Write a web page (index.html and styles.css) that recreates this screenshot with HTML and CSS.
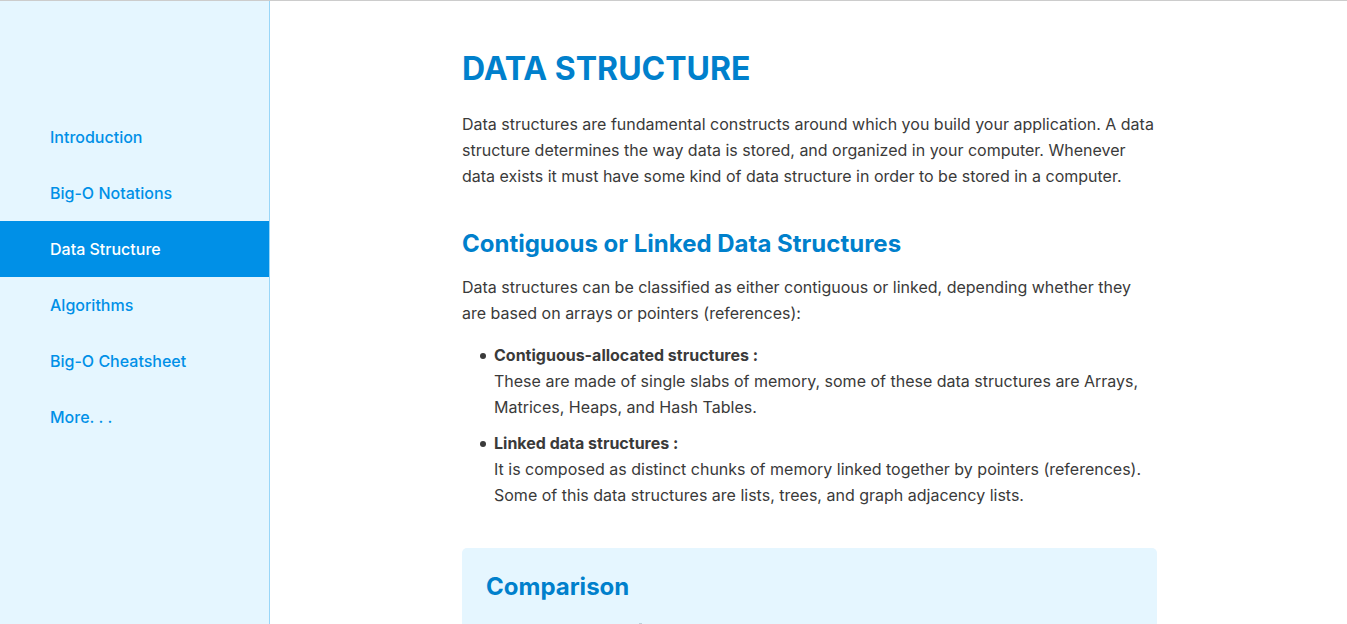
FILE: index.html
```
<!DOCTYPE html>
<html lang="en">
<head>
<meta charset="utf-8">
<title>Data Structure</title>
<link rel="stylesheet" href="styles.css">
</head>
<body>
<div class="page">
  <nav class="sidebar" aria-label="Topics">
    <ul class="menu">
      <li><a class="menu-link" href="#introduction">Introduction</a></li>
      <li><a class="menu-link" href="#notations">Big-O Notations</a></li>
      <li><a class="menu-link active" href="#data-structure" aria-current="page">Data Structure</a></li>
      <li><a class="menu-link" href="#algorithms">Algorithms</a></li>
      <li><a class="menu-link" href="#cheatsheet">Big-O Cheatsheet</a></li>
      <li><a class="menu-link" href="#more">More. . .</a></li>
    </ul>
  </nav>
  <main class="content">
    <article class="article">
      <h1 class="title">DATA STRUCTURE</h1>
      <p class="text">Data structures are fundamental constructs around which you build your application. A data structure determines the way data is stored, and organized in your computer. Whenever data exists it must have some kind of data structure in order to be stored in a computer.</p>
      <h2 class="subtitle">Contiguous or Linked Data Structures</h2>
      <p class="text">Data structures can be classified as either contiguous or linked, depending whether they are based on arrays or pointers (references):</p>
      <ul class="list">
        <li class="item"><div><strong>Contiguous-allocated structures :</strong><br>These are made of single slabs of memory, some of these data structures are Arrays, Matrices, Heaps, and Hash Tables.</div></li>
        <li class="item"><div><strong>Linked data structures :</strong><br>It is composed as distinct chunks of memory linked together by pointers (references). Some of this data structures are lists, trees, and graph adjacency lists.</div></li>
      </ul>
      <section class="panel">
        <h2 class="panel-title">Comparison</h2>
        <div class="panel-mark"></div>
      </section>
    </article>
  </main>
</div>
</body>
</html>
```

FILE: styles.css
```
* {
  box-sizing: border-box;
}

body {
  margin: 0;
  font-family: Inter, sans-serif;
  font-size: 16px;
  line-height: 26px;
  color: #3a3a3a;
  background: #fff;
}

.page {
  display: flex;
  height: 100vh;
  overflow: hidden;
  border-top: 1px solid #ccc;
}

.sidebar {
  flex: 0 0 270px;
  padding-top: 108px;
  background: #e5f6ff;
  border-right: 1px solid #99d6f8;
}

.menu {
  margin: 0;
  padding: 0;
  list-style: none;
}

.menu-link {
  display: block;
  padding: 15px 50px;
  font-weight: 500;
  color: #0090e7;
  text-decoration: none;
}

.menu-link.active {
  color: #fff;
  background: #0090e7;
}

.content {
  flex: 1;
  padding: 48px 190px 0 192px;
}

.title {
  margin: 0 0 22px;
  font-size: 32px;
  line-height: 40px;
  font-weight: 700;
  color: #0080cc;
}

.text {
  margin: 0;
}

.subtitle {
  margin: 39px 0 14px;
  font-size: 24px;
  line-height: 32px;
  font-weight: 700;
  color: #0080cc;
}

.list {
  display: grid;
  gap: 10px;
  margin: 16px 0 0;
  padding: 0 0 0 18px;
  list-style: none;
}

.item {
  display: flex;
  gap: 8px;
}

.item::before {
  content: "";
  flex: 0 0 6px;
  height: 6px;
  margin-top: 11px;
  border-radius: 50%;
  background: #3a3a3a;
}

.panel {
  min-height: 200px;
  margin-top: 40px;
  padding: 23px 24px;
  background: #e5f6ff;
  border-radius: 5px;
}

.panel-title {
  margin: 0 0 20px;
  font-size: 24px;
  line-height: 32px;
  color: #0080cc;
}

.panel-mark {
  width: 3px;
  height: 12px;
  margin-left: 153px;
  background: #bed0da;
}
```
